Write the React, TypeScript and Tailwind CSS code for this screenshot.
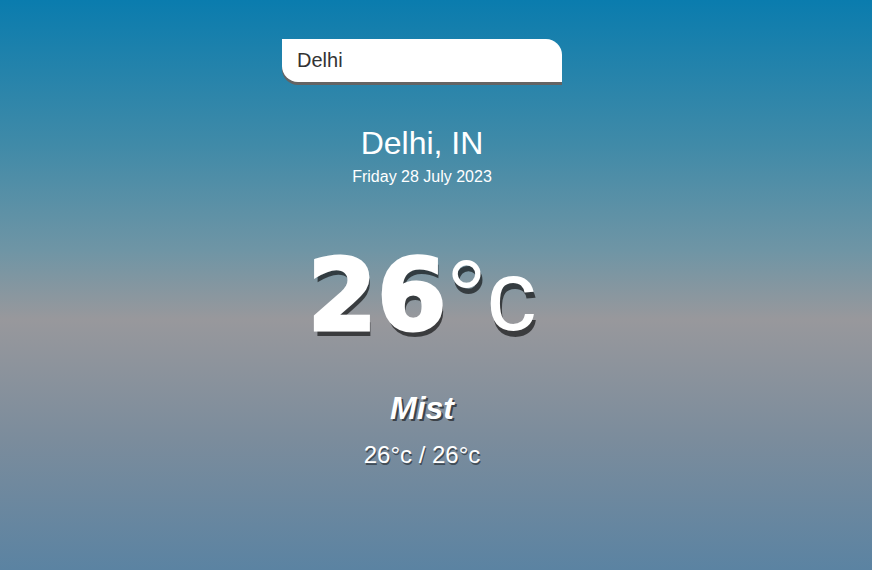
import React from "react";

export default function App() {
  return (
    <div
      className="min-h-screen w-full bg-[linear-gradient(to_bottom,#0a7cae_0%,#3f8aa8_25%,#6f95a5_44%,#98989c_56%,#7b8c9c_77%,#5b83a2_100%)] font-['Liberation_Sans',Arial,sans-serif] text-white"
    >
      <div className="flex flex-col items-center pr-[28px] pt-[39px]">
        <input
          defaultValue="Delhi"
          className="h-[43px] w-[280px] rounded-tr-[16px] rounded-bl-[16px] bg-white pl-[15px] text-[20px] text-[#333] shadow-[0_3px_0_#646464] outline-none font-['Liberation_Sans',Arial,sans-serif]"
        />
        <div className="mt-[43px] text-[32px] leading-[36px]">Delhi, IN</div>
        <div className="mt-[6px] text-[16px] leading-[20px]">Friday 28 July 2023</div>
        <div className="mt-[58px] flex items-baseline leading-none [text-shadow:2px_6px_rgba(0,0,0,0.6)]">
          <span className="font-['DejaVu_Sans',sans-serif] text-[100px] font-bold [-webkit-text-stroke:3px_white]">26</span>
          <span className="text-[100px] font-normal">°c</span>
        </div>
        <div className="mt-[44px] text-[32px] font-bold italic leading-[36px] [text-shadow:2px_2px_rgba(0,0,0,0.55)]">
          Mist
        </div>
        <div className="mt-[15px] text-[24px] leading-[28px] [text-shadow:1px_2px_rgba(0,0,0,0.45)]">
          26°c / 26°c
        </div>
      </div>
    </div>
  );
}
